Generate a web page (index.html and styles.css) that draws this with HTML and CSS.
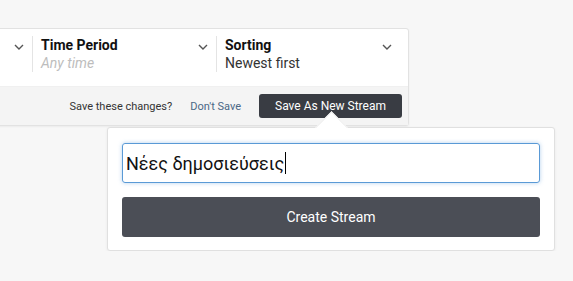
FILE: index.html
```html
<!DOCTYPE html>
<html lang="en">
<head>
	<meta charset="UTF-8">
	<title>Stream filters</title>
	<link rel="stylesheet" href="styles.css">
</head>
<body>

	<div class="filter-card">
		<div class="filter-row">
			<div class="filter">
				<div class="filter-text"></div>
				<svg class="chevron" viewBox="0 0 10 6"><path d="M1 1l4 4 4-4"/></svg>
			</div>
			<div class="filter">
				<div class="filter-text">
					<p class="filter-label">Time Period</p>
					<p class="filter-value empty">Any time</p>
				</div>
				<svg class="chevron" viewBox="0 0 10 6"><path d="M1 1l4 4 4-4"/></svg>
			</div>
			<div class="filter">
				<div class="filter-text">
					<p class="filter-label">Sorting</p>
					<p class="filter-value">Newest first</p>
				</div>
				<svg class="chevron" viewBox="0 0 10 6"><path d="M1 1l4 4 4-4"/></svg>
			</div>
		</div>
		<div class="save-bar">
			<span class="save-question">Save these changes?</span>
			<a class="dont-save" href="#">Don't Save</a>
			<button class="save-new">Save As New Stream</button>
		</div>
	</div>

	<div class="popover">
		<div class="stream-name">Νέες δημοσιεύσεις<span class="caret"></span></div>
		<button class="create-stream">Create Stream</button>
	</div>

</body>
</html>
```

FILE: styles.css
```css
body {
	font-family: Roboto, "Noto Sans", sans-serif;
	margin: 0;
	padding: 28px 0 0 0;
	background-color: #f7f7f7;
	color: #222;
	overflow: hidden;
}
p {
	margin: 0;
}
.filter-card {
	width: 570px;
	margin-left: -161px;
	box-sizing: border-box;
	background-color: #fff;
	border: 1px solid #e2e2e2;
	border-radius: 3px;
	box-shadow: 0 1px 2px rgba(0, 0, 0, 0.05);
}
.filter-row {
	display: flex;
	padding: 7px 8px 14px 8px;
}
.filter {
	width: 184px;
	min-height: 36px;
	box-sizing: border-box;
	display: flex;
	align-items: flex-start;
	justify-content: space-between;
	padding: 0 8px 0 8px;
	border-left: 1px solid #e4e4e4;
}
.filter:first-child {
	border-left: none;
}
.filter-label {
	font-size: 14px;
	font-weight: bold;
	line-height: 18px;
	color: #111;
}
.filter-value {
	font-size: 14px;
	line-height: 18px;
	color: #333;
}
.filter-value.empty {
	color: #bdbdbd;
	font-style: italic;
}
.chevron {
	width: 10px;
	height: 6px;
	margin-top: 8px;
	fill: none;
	stroke: #555;
	stroke-width: 1.4;
}
.save-bar {
	display: flex;
	align-items: center;
	justify-content: flex-end;
	gap: 18px;
	padding: 7px 6px 7px 0;
	background-color: #f4f4f4;
	border-top: 1px solid #f0f0f0;
}
.save-question {
	font-size: 11px;
	color: #333;
}
.dont-save {
	font-size: 11px;
	color: #4b6886;
	text-decoration: none;
}
.save-new {
	font-family: inherit;
	font-size: 12px;
	color: #fff;
	background-color: #393c43;
	border: none;
	border-radius: 3px;
	height: 24px;
	padding: 0 16px;
}
.popover {
	position: relative;
	width: 448px;
	box-sizing: border-box;
	margin: 1px 0 0 107px;
	padding: 15px 14px 13px 14px;
	background-color: #fff;
	border: 1px solid #e0e0e0;
	border-radius: 3px;
	box-shadow: 0 1px 3px rgba(0, 0, 0, 0.06);
}
.popover::before {
	content: '';
	position: absolute;
	left: 212px;
	top: -12px;
	width: 22px;
	height: 22px;
	background-color: #fff;
	border-left: 1px solid #eee;
	border-top: 1px solid #eee;
	transform: rotate(45deg);
}
.stream-name {
	position: relative;
	height: 40px;
	box-sizing: border-box;
	display: flex;
	align-items: center;
	padding: 0 3px;
	font-size: 18px;
	color: #111;
	border: 1px solid #5a9ad6;
	border-radius: 3px;
	box-shadow: 0 0 4px rgba(90, 154, 214, 0.45);
}
.caret {
	display: inline-block;
	width: 1px;
	height: 22px;
	margin-left: 1px;
	background-color: #000;
}
.create-stream {
	display: block;
	width: 100%;
	height: 40px;
	margin-top: 14px;
	font-family: inherit;
	font-size: 14px;
	color: #fff;
	background-color: #4b4e56;
	border: none;
	border-radius: 3px;
}
```
